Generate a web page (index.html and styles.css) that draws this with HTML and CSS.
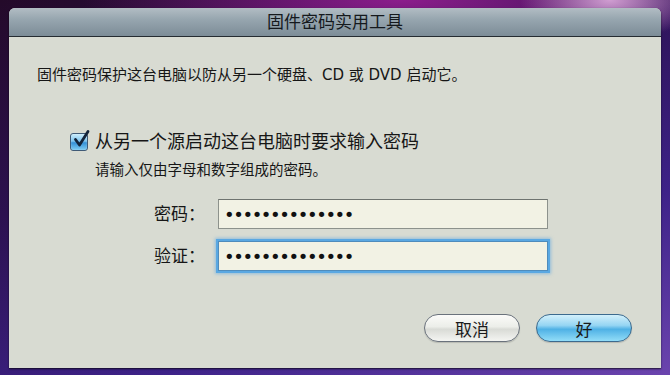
FILE: index.html
```html
<!DOCTYPE html>
<html lang="zh-CN">
<head>
<meta charset="utf-8">
<title>固件密码实用工具</title>
<link rel="stylesheet" href="styles.css">
</head>
<body>
<div class="window">
  <div class="titlebar">固件密码实用工具</div>
  <div class="content">
    <p class="intro">固件密码保护这台电脑以防从另一个硬盘、CD 或 DVD 启动它。</p>
    <div class="option">
      <div class="check-row">
        <span class="checkbox">
          <svg class="check" viewBox="0 0 20 20" width="20" height="20"><path d="M4.5 9.5 L8.5 15 L17 1.5" fill="none" stroke="#14243a" stroke-width="2.8" stroke-linecap="round" stroke-linejoin="round"/></svg>
        </span>
        <span class="check-label">从另一个源启动这台电脑时要求输入密码</span>
      </div>
      <p class="hint">请输入仅由字母和数字组成的密码。</p>
    </div>
    <div class="fields">
      <label class="field-label" for="pw">密码：</label>
      <input class="field" id="pw" type="password" value="abcdefghijklmn" readonly>
      <label class="field-label" for="verify">验证：</label>
      <input class="field focused" id="verify" type="password" value="abcdefghijklmn" readonly>
    </div>
    <div class="buttons">
      <button class="btn">取消</button>
      <button class="btn default">好</button>
    </div>
  </div>
</div>
</body>
</html>
```
FILE: styles.css
```css
html, body {
  margin: 0;
  height: 375px;
  overflow: hidden;
}
body {
  box-sizing: border-box;
  padding: 8px 9px 0 9px;
  font-family: "DejaVu Sans", "Noto Sans CJK SC", sans-serif;
  color: #161616;
  background:
    radial-gradient(ellipse 90px 40px at 91% 0%, rgba(215,165,215,0.95), rgba(215,165,215,0) 100%),
    radial-gradient(ellipse 320px 60px at 60% 0%, #8c1d8c, rgba(140,29,140,0) 100%),
    linear-gradient(160deg, #240a2a 0%, #2c1150 35%, #3d2288 70%, #6b44ae 100%);
}
.window {
  width: 652px;
  height: 360px;
  display: flex;
  flex-direction: column;
  background: #d8dbd2;
  border-radius: 6px 6px 0 0;
  box-shadow: 0 1px 2px rgba(0,0,0,0.7);
  overflow: hidden;
}
.titlebar {
  height: 28px;
  line-height: 28px;
  text-align: center;
  font-size: 17px;
  color: #15191d;
  background: linear-gradient(#b2bdc4 0%, #97a6af 40%, #7c8c97 100%);
  border-bottom: 1px solid #252c31;
}
.content {
  flex: 1;
  display: flex;
  flex-direction: column;
  padding: 28px 29px 26px 28px;
}
.intro {
  margin: 0;
  font-size: 15px;
  line-height: 20px;
}
.option {
  margin-top: 46px;
}
.check-row {
  display: flex;
  align-items: center;
  gap: 7px;
  padding-left: 33px;
  height: 22px;
}
.checkbox {
  position: relative;
  width: 16px;
  height: 16px;
  border: 1px solid #3f5a76;
  border-radius: 3px;
  background: linear-gradient(#cdeefc 0%, #7cc3ee 45%, #3590d6 55%, #7fcdf4 100%);
  box-shadow: inset 0 0 1px rgba(255,255,255,0.7);
}
.check {
  position: absolute;
  left: 0;
  top: -4px;
  overflow: visible;
}
.check-label {
  font-size: 18px;
  line-height: 22px;
}
.hint {
  margin: 7px 0 0 0;
  padding-left: 58px;
  font-size: 14.5px;
  line-height: 20px;
}
.fields {
  margin-top: 19px;
  display: grid;
  grid-template-columns: 168px 330px;
  column-gap: 13px;
  row-gap: 12px;
  align-items: center;
}
.field-label {
  text-align: right;
  font-size: 17px;
  line-height: 22px;
}
.field {
  box-sizing: border-box;
  height: 30px;
  margin: 0;
  padding: 0 0 0 5px;
  border: 1px solid #8d928c;
  border-top-color: #6e736f;
  background: #f2f2e4;
  font-family: "DejaVu Sans", sans-serif;
  font-size: 18px;
  letter-spacing: -1.4px;
  color: #111;
  outline: none;
}
.field.focused {
  border: 1px solid #4f8cbc;
  box-shadow: 0 0 0 2px #5aa8e2, 0 0 3px 3px rgba(90,165,225,0.55);
}
.buttons {
  margin-top: 43px;
  display: flex;
  justify-content: flex-end;
  gap: 16px;
}
.btn {
  width: 96px;
  height: 28px;
  margin: 0;
  padding: 0;
  border-radius: 14px;
  border: 1px solid #6a727c;
  font-family: "DejaVu Sans", "Noto Sans CJK SC", sans-serif;
  font-size: 17px;
  color: #1a1a1a;
  background: linear-gradient(#fbfbf9 0%, #eceee9 45%, #d9dbd6 55%, #f4f5f2 100%);
  box-shadow: 0 1px 1px rgba(0,0,0,0.15);
}
.btn.default {
  border-color: #3c6a8e;
  background: linear-gradient(#d3f0fb 0%, #95d5f3 40%, #4fb1e5 55%, #92ddf8 100%);
}
```
